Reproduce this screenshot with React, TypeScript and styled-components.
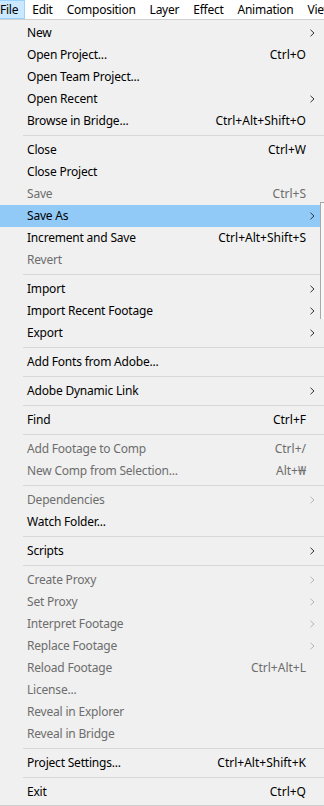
import React from 'react';
import styled, { createGlobalStyle } from 'styled-components';

const GlobalStyle = createGlobalStyle`
  html, body {
    margin: 0;
    padding: 0;
    background: #ffffff;
    overflow: hidden;
  }
  body {
    font-family: 'Noto Sans', 'Noto Sans CJK KR', Arial, sans-serif;
    font-size: 12px;
    color: #000000;
  }
`;

type Entry =
  | { kind: 'sep' }
  | {
      kind: 'item';
      label: string;
      shortcut?: string;
      sub?: boolean;
      disabled?: boolean;
      active?: boolean;
    };

const sep: Entry = { kind: 'sep' };
const item = (
  label: string,
  opts: { shortcut?: string; sub?: boolean; disabled?: boolean; active?: boolean } = {}
): Entry => ({ kind: 'item', label, ...opts });

const entries: Entry[] = [
  item('New', { sub: true }),
  item('Open Project...', { shortcut: 'Ctrl+O' }),
  item('Open Team Project...'),
  item('Open Recent', { sub: true }),
  item('Browse in Bridge...', { shortcut: 'Ctrl+Alt+Shift+O' }),
  sep,
  item('Close', { shortcut: 'Ctrl+W' }),
  item('Close Project'),
  item('Save', { shortcut: 'Ctrl+S', disabled: true }),
  item('Save As', { sub: true, active: true }),
  item('Increment and Save', { shortcut: 'Ctrl+Alt+Shift+S' }),
  item('Revert', { disabled: true }),
  sep,
  item('Import', { sub: true }),
  item('Import Recent Footage', { sub: true }),
  item('Export', { sub: true }),
  sep,
  item('Add Fonts from Adobe...'),
  sep,
  item('Adobe Dynamic Link', { sub: true }),
  sep,
  item('Find', { shortcut: 'Ctrl+F' }),
  sep,
  item('Add Footage to Comp', { shortcut: 'Ctrl+/', disabled: true }),
  item('New Comp from Selection...', { shortcut: 'Alt+₩', disabled: true }),
  sep,
  item('Dependencies', { sub: true, disabled: true }),
  item('Watch Folder...'),
  sep,
  item('Scripts', { sub: true }),
  sep,
  item('Create Proxy', { sub: true, disabled: true }),
  item('Set Proxy', { sub: true, disabled: true }),
  item('Interpret Footage', { sub: true, disabled: true }),
  item('Replace Footage', { sub: true, disabled: true }),
  item('Reload Footage', { shortcut: 'Ctrl+Alt+L', disabled: true }),
  item('License...', { disabled: true }),
  item('Reveal in Explorer', { disabled: true }),
  item('Reveal in Bridge', { disabled: true }),
  sep,
  item('Project Settings...', { shortcut: 'Ctrl+Alt+Shift+K' }),
  sep,
  item('Exit', { shortcut: 'Ctrl+Q' }),
];

const menuBarItems = ['File', 'Edit', 'Composition', 'Layer', 'Effect', 'Animation', 'View'];

const Screen = styled.div`
  position: relative;
  width: 324px;
  height: 806px;
  overflow: hidden;
  background: #ffffff;
`;

const MenuBar = styled.div`
  display: flex;
  height: 19px;
  margin-left: -7px;
  background: #ffffff;
  white-space: nowrap;
`;

const BarItem = styled.div<{ $open?: boolean }>`
  display: flex;
  align-items: center;
  flex-shrink: 0;
  box-sizing: border-box;
  height: 19px;
  padding: 0 6px;
  letter-spacing: -0.25px;
  background: ${p => (p.$open ? '#cce8ff' : 'transparent')};
  border: 1px solid ${p => (p.$open ? '#99d1ff' : 'transparent')};
`;

const Menu = styled.div`
  box-sizing: border-box;
  width: 324px;
  padding: 2px 0;
  background: #f0f0f0;
  border-top: 1px solid #cfcfcf;
  border-bottom: 1px solid #cfcfcf;
`;

const Row = styled.div<{ $disabled?: boolean; $active?: boolean }>`
  display: grid;
  grid-template-columns: 1fr auto 18px;
  align-items: center;
  height: 22px;
  padding-left: 27px;
  white-space: nowrap;
  color: ${p => (p.$disabled ? '#6d6d6d' : '#000000')};
  background: ${p => (p.$active ? '#91c9f7' : 'transparent')};
`;

const Label = styled.span`
  line-height: 22px;
  letter-spacing: -0.2px;
`;

const Shortcut = styled.span`
  line-height: 22px;
  text-align: right;
  letter-spacing: 0;
`;

const ArrowCell = styled.span<{ $disabled?: boolean }>`
  display: flex;
  align-items: center;
  padding-left: 4px;
  color: ${p => (p.$disabled ? '#b4b4b4' : '#333333')};
`;

const Separator = styled.div`
  height: 7px;
  display: flex;
  align-items: center;
  padding-left: 23px;

  &::after {
    content: '';
    flex: 1;
    height: 1px;
    background: #d7d7d7;
  }
`;

const SubMenuEdge = styled.div`
  position: absolute;
  left: 320px;
  top: 202px;
  width: 12px;
  height: 116px;
  background: #f7f7f7;
  border-left: 1px solid #a8a8a8;
  border-top: 1px solid #a8a8a8;
`;

const Chevron = () => (
  <svg width="5" height="8" viewBox="0 0 5 8">
    <path d="M0.5 0.8 L4 4 L0.5 7.2" fill="none" stroke="currentColor" strokeWidth="1" />
  </svg>
);

export default function App() {
  return (
    <Screen>
      <GlobalStyle />
      <MenuBar>
        {menuBarItems.map((name, i) => (
          <BarItem key={name} $open={i === 0}>
            {name}
          </BarItem>
        ))}
      </MenuBar>
      <Menu>
        {entries.map((e, i) =>
          e.kind === 'sep' ? (
            <Separator key={i} />
          ) : (
            <Row key={i} $disabled={e.disabled} $active={e.active}>
              <Label>{e.label}</Label>
              <Shortcut>{e.shortcut}</Shortcut>
              <ArrowCell $disabled={e.disabled}>{e.sub && <Chevron />}</ArrowCell>
            </Row>
          )
        )}
      </Menu>
      <SubMenuEdge />
    </Screen>
  );
}
